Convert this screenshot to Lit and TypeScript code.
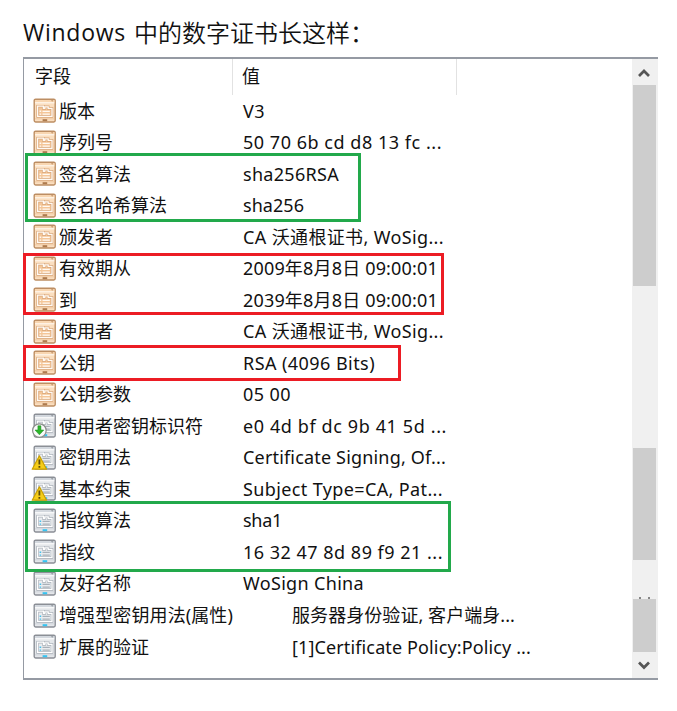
import { LitElement, html, svg, css } from "lit";
import { customElement, property } from "lit/decorators.js";
import { styleMap } from "lit/directives/style-map.js";

type Kind = "v1" | "download" | "warning" | "prop";
interface Field { kind: Kind; name: string; value: string; width: number; nameWidth?: number; wide?: boolean; }

const FIELDS: Field[] = [
  { kind: "v1", name: "版本", value: "V3", width: 22 },
  { kind: "v1", name: "序列号", value: "50 70 6b cd d8 13 fc ...", width: 199 },
  { kind: "v1", name: "签名算法", value: "sha256RSA", width: 96 },
  { kind: "v1", name: "签名哈希算法", value: "sha256", width: 61 },
  { kind: "v1", name: "颁发者", value: "CA 沃通根证书, WoSig...", width: 201 },
  { kind: "v1", name: "有效期从", value: "2009年8月8日 09:00:01", width: 195 },
  { kind: "v1", name: "到", value: "2039年8月8日 09:00:01", width: 195 },
  { kind: "v1", name: "使用者", value: "CA 沃通根证书, WoSig...", width: 201 },
  { kind: "v1", name: "公钥", value: "RSA (4096 Bits)", width: 132 },
  { kind: "v1", name: "公钥参数", value: "05 00", width: 48 },
  { kind: "download", name: "使用者密钥标识符", value: "e0 4d bf dc 9b 41 5d ...", width: 204 },
  { kind: "warning", name: "密钥用法", value: "Certificate Signing, Of...", width: 203 },
  { kind: "warning", name: "基本约束", value: "Subject Type=CA, Pat...", width: 200 },
  { kind: "prop", name: "指纹算法", value: "sha1", width: 39 },
  { kind: "prop", name: "指纹", value: "16 32 47 8d 89 f9 21 ...", width: 200 },
  { kind: "prop", name: "友好名称", value: "WoSign China", width: 121 },
  { kind: "prop", name: "增强型密钥用法(属性)", nameWidth: 174, value: "服务器身份验证, 客户端身...", width: 223, wide: true },
  { kind: "prop", name: "扩展的验证", value: "[1]Certificate Policy:Policy ...", width: 239, wide: true },
];

/** A run of text whose letter spacing is adjusted to fill a given width. */
@customElement("fit-text")
class FitText extends LitElement {
  @property({ type: Number }) width = 0;
  @property() text = "";
  static styles = css`
    :host { display: inline-block; white-space: pre; }
    .run { display: inline-block; }
  `;
  firstUpdated() {
    const run = this.renderRoot.querySelector(".run") as HTMLElement;
    if (!this.width) return;
    const gap = (this.width - run.getBoundingClientRect().width) / this.text.length;
    run.style.letterSpacing = `${gap}px`;
  }
  render() { return html`<span class="run">${this.text}</span>`; }
}

@customElement("field-icon")
class FieldIcon extends LitElement {
  @property() kind: Kind = "v1";
  static styles = css`
    :host { display: block; width: 24px; height: 25px; }
    svg { display: block; overflow: visible; }
  `;
  render() {
    const warm = this.kind === "v1";
    const edge = warm ? "#bd8e63" : "#8b8f96";
    const fill = warm ? "#fbdfc0" : "#e4e7ea";
    const bar = warm ? "#f8d6b1" : "#d3d8de";
    const line = warm ? "#fffaf4" : "#ffffff";
    const ink = warm ? "#d9a679" : "#a9b0b8";
    const dot = warm ? "#fffaf4" : "#45bfec";
    return html`<svg width="24" height="25" viewBox="0 0 24 25">
      <rect x="2.2" y="1.2" width="21" height="22.8" rx="1.4" fill=${fill} stroke=${edge} stroke-width="1.4"/>
      <path d="M3 3H22.4" stroke=${bar} stroke-width="2"/>
      <path d="M3 4.8H22.4" stroke=${line} stroke-width="1"/>
      <path d="M19 2.3H21.4L20.2 3.8Z" fill=${edge}/>
      <path d="M5.6 18.4V8.2H11.4V10.4H12.8V8.8H16.2V10.4H20V18.4Z" fill=${warm ? "#f4c698" : "#e9ecef"} stroke=${ink} stroke-width="2.6"/>
      <path d="M5.6 18.4V8.2H11.4V10.4H12.8V8.8H16.2V10.4H20V18.4Z" fill="none" stroke=${line} stroke-width="1.3"/>
      <path d="M10.5 13.3H17.8M10.5 16.1H17.8" stroke=${warm ? line : ink} stroke-width="1.3"/>
      <path d="M7.6 13.3H9.2M7.6 16.1H9.2" stroke=${dot} stroke-width="1.4"/>
      <path d="M3 20.8H22.4" stroke=${warm ? "#edc49b" : "#cbd0d5"} stroke-width=".8"/>
      <rect x="10.6" y="21.2" width="4.6" height="2" fill=${warm ? "#ad7b4e" : "#35c4f2"}/>
      ${this.kind === "download" ? svg`
        <circle cx="7.4" cy="17.6" r="6.8" fill="#fafafa" stroke="#8b8e8b" stroke-width="1.2"/>
        <path d="M5.9 12.8H8.9V17H11.8L7.4 21.8L3 17H5.9Z" fill="#2db62b" stroke="#168a1a" stroke-width=".5"/>` : ""}
      ${this.kind === "warning" ? svg`
        <path d="M7.4 10.8L14.6 24.2H.2Z" fill="#f5cd19" stroke="#cba000" stroke-width="1.2" stroke-linejoin="round"/>
        <path d="M7.4 14.6V19.6M7.4 21V22.8" stroke="#5c4b08" stroke-width="1.8"/>` : ""}
    </svg>`;
  }
}

@customElement("scroll-bar")
class ScrollBar extends LitElement {
  static styles = css`
    :host { display: flex; flex-direction: column; width: 26px; background: #f0f0f0; }
    .button { height: 26px; flex: none; }
    .button.down { height: 25px; }
    .button svg { display: block; }
    .thumb { width: 22.5px; margin-left: 1px; background: #cdcdcd; flex: none; }
    .first { height: 201px; }
    .second { height: 112px; margin-top: 162px; }
    .third { height: 53px; }
    .gap { height: 39px; display: flex; align-items: flex-end; gap: 7px; padding-left: 7px; box-sizing: border-box; }
    .tick { width: 2px; height: 2px; background: #858585; }
  `;
  render() {
    return html`
      <div class="button"><svg width="25" height="26"><path d="M7 17L12 12L17 17" fill="none" stroke="#555" stroke-width="2.7"/></svg></div>
      <div class="thumb first"></div>
      <div class="thumb second"></div>
      <div class="gap"><i class="tick"></i><i class="tick"></i></div>
      <div class="thumb third"></div>
      <div class="button down"><svg width="25" height="25"><path d="M7 10.5L12 15.5L17 10.5" fill="none" stroke="#555" stroke-width="2.7"/></svg></div>`;
  }
}

const MARKS = [
  { color: "#22a94b", x: 25, y: 152.5, w: 336, h: 69 },
  { color: "#ec1c24", x: 23, y: 253, w: 420.5, h: 61.5 },
  { color: "#ec1c24", x: 23, y: 345, w: 378, h: 35.5 },
  { color: "#22a94b", x: 24.5, y: 501, w: 426, h: 71 },
];

@customElement("app-root")
class AppRoot extends LitElement {
  static styles = css`
    :host { display: block; position: relative; height: 711px; overflow: hidden; background: #fff; color: #111;
      font: 18px/24px "Noto Sans", "Noto Sans CJK SC", sans-serif; }
    .title { margin: 0; height: 57px; box-sizing: border-box; padding: 14px 0 0 23px; display: flex; gap: 8px;
      font: 400 24px/36px "Noto Sans", "Noto Sans CJK SC", sans-serif; color: #111; }
    .title .product { font-family: "Open Sans", sans-serif; font-size: 23px; }
    .title .rest { font-family: "Noto Sans CJK SC", sans-serif; font-weight: 350; }
    .frame { width: 635px; height: 623px; margin-left: 23px; box-sizing: border-box; display: flex;
      border: 2px solid #959aa3; border-right: 0; border-left-width: 1.5px; }
    .list { flex: 1; min-width: 0; }
    .head { height: 36px; display: flex; }
    .cell { box-sizing: border-box; border-right: 1px solid #e2e2e2; height: 36px; padding: 5px 0 0 9px; }
    .cell.field { width: 209px; padding-left: 11px; }
    .cell.value { width: 224px; }
    .row { height: 31.53px; display: flex; align-items: center; }
    .row field-icon { margin: 0 3px 0 8px; }
    .row .name { width: 184px; }
    .row.wide .name { width: 233px; }
    .mark { position: absolute; box-sizing: border-box; border: 3px solid; pointer-events: none; }
  `;
  render() {
    return html`
      <h1 class="title"><fit-text class="product" text="Windows" width="103"></fit-text><span class="rest">中的数字证书长这样：</span></h1>
      <div class="frame">
        <div class="list">
          <div class="head"><div class="cell field">字段</div><div class="cell value">值</div></div>
          ${FIELDS.map((f) => html`
            <div class="row ${f.wide ? "wide" : ""}">
              <field-icon .kind=${f.kind}></field-icon>
              <div class="name"><fit-text .text=${f.name} .width=${f.nameWidth ?? 0}></fit-text></div>
              <fit-text .text=${f.value} .width=${f.width}></fit-text>
            </div>`)}
        </div>
        <scroll-bar></scroll-bar>
      </div>
      ${MARKS.map((m) => html`<div class="mark" style=${styleMap({ left: `${m.x}px`, top: `${m.y}px`, width: `${m.w}px`, height: `${m.h}px`, borderColor: m.color })}></div>`)}`;
  }
}
